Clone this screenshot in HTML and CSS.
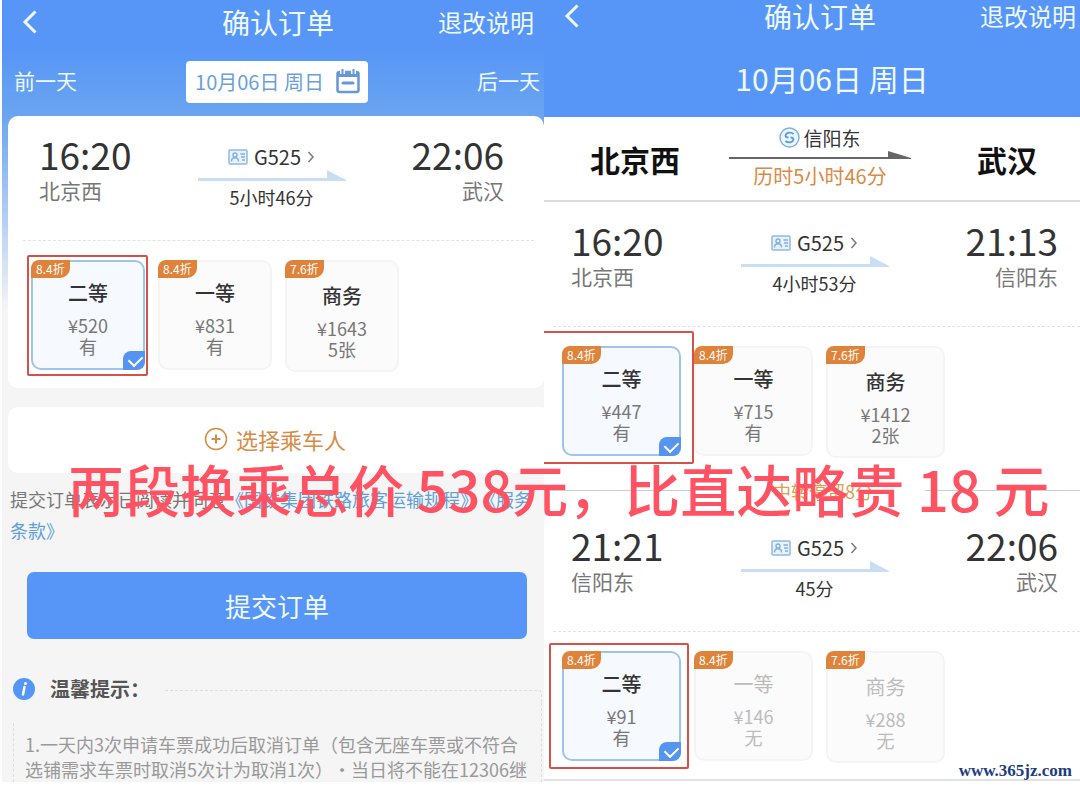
FILE: index.html
```html
<!DOCTYPE html>
<html lang="zh-CN">
<head>
    <meta charset="utf-8">
    <title>确认订单</title>
    <link rel="stylesheet" href="styles.css">
</head>
<body>
    <svg class="defs" width="0" height="0">
        <symbol id="back" viewBox="0 0 16 24">
            <path d="M13.500 1.500 3 12l10.500 10.500" fill="none" stroke="currentColor" stroke-width="3"/>
        </symbol>
        <symbol id="idcard" viewBox="0 0 20 16">
            <rect x="1" y="1" width="18" height="14" rx="1" fill="#eaf3fc" stroke="#8dbbe8" stroke-width="1.500"/>
            <circle cx="7" cy="6" r="2" fill="none" stroke="#7fb0e4" stroke-width="1.400"/>
            <path d="M3.500 12.500c0-5 7-5 7 0M12.500 5H17M13 8h4M14 11h3" fill="none" stroke="#7fb0e4" stroke-width="1.400"/>
        </symbol>
        <symbol id="more" viewBox="0 0 8 12">
            <path d="M1.500 1 6 6l-4.500 5" fill="none" stroke="#777" stroke-width="1.500"/>
        </symbol>
        <symbol id="arrow" viewBox="0 0 148 12">
            <path d="M0 8h129V0l19 10v1H0z" fill="#c9def5"/>
        </symbol>
    </svg>

    <div class="compare">
        <!-- direct train -->
        <section class="phone phone-direct">
            <header class="bar">
                <button class="back" aria-label="返回"><svg width="16" height="24"><use href="#back"/></svg></button>
                <h1>确认订单</h1>
                <a class="rules" href="#">退改说明</a>
            </header>
            <nav class="days">
                <button class="day">前一天</button>
                <button class="date">10月06日 周日
                    <svg width="24" height="26" viewBox="0 0 24 26">
                        <rect x="1.500" y="4" width="21" height="20" rx="2" fill="none" stroke="#6598d6" stroke-width="2.500"/>
                        <path d="M1 4h22v5H1z" fill="#6598d6"/>
                        <path d="M6.500 0v6M17.500 0v6" stroke="#fff" stroke-width="5"/>
                        <path d="M6.500 1v5M17.500 1v5" stroke="#6598d6" stroke-width="2"/>
                        <path d="M7 15h10" stroke="#6598d6" stroke-width="3" stroke-linecap="round"/>
                    </svg>
                </button>
                <button class="day">后一天</button>
            </nav>

            <div class="card">
                <div class="trip">
                    <div class="stop"><b>16:20</b><span>北京西</span></div>
                    <div class="train">
                        <a href="#"><svg width="20" height="16"><use href="#idcard"/></svg>G525<svg width="8" height="12"><use href="#more"/></svg></a>
                        <svg class="arrow" width="148" height="12"><use href="#arrow"/></svg>
                        <span>5小时46分</span>
                    </div>
                    <div class="stop stop-end"><b>22:06</b><span>武汉</span></div>
                </div>
                <div class="seats">
                    <label class="seat marked">
                        <input type="radio" name="direct" checked>
                        <i>8.4折</i><b>二等</b><span>¥520</span><span>有</span>
                    </label>
                    <label class="seat">
                        <input type="radio" name="direct">
                        <i>8.4折</i><b>一等</b><span>¥831</span><span>有</span>
                    </label>
                    <label class="seat business">
                        <input type="radio" name="direct">
                        <i>7.6折</i><b>商务</b><span>¥1643</span><span>5张</span>
                    </label>
                </div>
            </div>

            <button class="card passenger">
                <svg width="24" height="24" viewBox="0 0 24 24" fill="none" stroke="#d68c45">
                    <circle cx="12" cy="12" r="10.500" stroke-width="1.500"/>
                    <path d="M12 7.500v9M7.500 12h9" stroke-width="2"/>
                </svg>
                选择乘车人
            </button>

            <p class="terms">提交订单表示已阅读并同意<a href="#">《国铁集团铁路旅客运输规程》《服务条款》</a></p>
            <button class="submit">提交订单</button>

            <div class="tips">
                <h2>
                    <svg width="22" height="22" viewBox="0 0 22 22">
                        <circle cx="11" cy="11" r="11" fill="#5595f3"/>
                        <path d="M11.500 9 10 16.500" stroke="#fff" stroke-width="2.500" stroke-linecap="round"/>
                        <circle cx="12.500" cy="5.500" r="1.500" fill="#fff"/>
                    </svg>
                    温馨提示：
                </h2>
                <div class="tips-body">
                    <p>1.一天内3次申请车票成功后取消订单（包含无座车票或不符合选铺需求车票时取消5次计为取消1次）・当日将不能在12306继</p>
                </div>
            </div>
        </section>

        <!-- same train, split in two legs -->
        <section class="phone phone-split">
            <header class="bar">
                <button class="back" aria-label="返回"><svg width="16" height="24"><use href="#back"/></svg></button>
                <h1>确认订单</h1>
                <a class="rules" href="#">退改说明</a>
            </header>
            <div class="big-date">10月06日 周日</div>

            <div class="route">
                <strong>北京西</strong>
                <div class="via">
                    <div class="via-stop">
                        <svg width="21" height="21" viewBox="0 0 21 21" fill="none" stroke="#7fb3df">
                            <circle cx="10.500" cy="10.500" r="9.500" fill="#eef6fd" stroke-width="1.500"/>
                            <path d="M14.500 7c-2-2-7-2-8 1.500 0 1.500 1.500 2 3 2M6.500 14c2 2 7 2 8-1.500 0-1.500-1.500-2-3-2" stroke="#5f9fd8" stroke-width="1.800"/>
                        </svg>
                        信阳东
                    </div>
                    <svg class="arrow" width="182" height="8" viewBox="0 0 182 8"><path d="M0 6h159V0l23 7v1H0z" fill="#666"/></svg>
                    <span class="total">历时5小时46分</span>
                </div>
                <strong>武汉</strong>
            </div>

            <div class="trip">
                <div class="stop"><b>16:20</b><span>北京西</span></div>
                <div class="train">
                    <a href="#"><svg width="20" height="16"><use href="#idcard"/></svg>G525<svg width="8" height="12"><use href="#more"/></svg></a>
                    <svg class="arrow" width="148" height="12"><use href="#arrow"/></svg>
                    <span>4小时53分</span>
                </div>
                <div class="stop stop-end"><b>21:13</b><span>信阳东</span></div>
            </div>
            <div class="seats">
                <label class="seat marked marked-wide">
                    <input type="radio" name="leg1" checked>
                    <i>8.4折</i><b>二等</b><span>¥447</span><span>有</span>
                </label>
                <label class="seat">
                    <input type="radio" name="leg1">
                    <i>8.4折</i><b>一等</b><span>¥715</span><span>有</span>
                </label>
                <label class="seat business">
                    <input type="radio" name="leg1">
                    <i>7.6折</i><b>商务</b><span>¥1412</span><span>2张</span>
                </label>
            </div>

            <div class="transfer">中转停留8分</div>

            <div class="trip">
                <div class="stop"><b>21:21</b><span>信阳东</span></div>
                <div class="train">
                    <a href="#"><svg width="20" height="16"><use href="#idcard"/></svg>G525<svg width="8" height="12"><use href="#more"/></svg></a>
                    <svg class="arrow" width="148" height="12"><use href="#arrow"/></svg>
                    <span>45分</span>
                </div>
                <div class="stop stop-end"><b>22:06</b><span>武汉</span></div>
            </div>
            <div class="seats">
                <label class="seat marked marked-mid">
                    <input type="radio" name="leg2" checked>
                    <i>8.4折</i><b>二等</b><span>¥91</span><span>有</span>
                </label>
                <label class="seat sold-out">
                    <input type="radio" name="leg2" disabled>
                    <i>8.4折</i><b>一等</b><span>¥146</span><span>无</span>
                </label>
                <label class="seat sold-out business">
                    <input type="radio" name="leg2" disabled>
                    <i>7.6折</i><b>商务</b><span>¥288</span><span>无</span>
                </label>
            </div>
        </section>

        <p class="caption">两段换乘总价 538元，比直达略贵 18 元</p>
        <div class="watermark">www.365jz.com</div>
    </div>
</body>
</html>
```

FILE: styles.css
```css
* {
    box-sizing: border-box;
}

body {
    margin: 0;
    background: #fff;
    color: #333;
    font-family: "Noto Sans CJK SC", sans-serif;
    font-size: 18px;
    text-spacing-trim: space-all;
}

h1, h2, p {
    margin: 0;
    font-weight: 400;
}

a {
    color: inherit;
    text-decoration: none;
}

button {
    border: 0;
    padding: 0;
    background: none;
    color: inherit;
    font: inherit;
    cursor: pointer;
}

svg {
    display: block;
    flex: none;
}

.defs {
    position: absolute;
}

.compare {
    position: relative;
    display: grid;
    grid-template-columns: 542fr 536fr;
    align-items: start;
    padding-left: 2px;
}

.phone {
    overflow: hidden;
    min-width: 0;
}

.phone-direct {
    background: #f5f5f5 linear-gradient(#5796f6 50px, #6ba5f0 116px, #f5f5f5 310px);
}

.phone-split {
    border-bottom: 2px solid #e2e2e2;
    background: #fff;
}

/* header */

.bar {
    display: grid;
    grid-template-columns: 1fr auto 1fr;
    align-items: center;
    height: 44px;
    padding: 0 10px 0 20px;
    color: #eefaff;
}

.bar h1 {
    font-size: 28px;
    line-height: 32px;
}

.back {
    justify-self: start;
}

.rules {
    justify-self: end;
    font-size: 24px;
    line-height: 32px;
}

.days {
    display: flex;
    justify-content: space-between;
    align-items: center;
    padding: 17px 4px 13px 12px;
    color: #eefaff;
}

.day {
    padding-bottom: 4px;
    font-size: 21px;
    line-height: 36px;
}

.date {
    display: flex;
    align-items: center;
    gap: 12px;
    height: 42px;
    padding: 0 8px 2px 9px;
    border-radius: 4px;
    background: #fff;
    color: #6b9fd8;
    font-size: 20px;
}

.phone-split .bar {
    height: 34px;
    padding: 0 4px 2px 20px;
    background: #5796f6;
}

.big-date {
    height: 83px;
    padding-left: 40px;
    background: #5796f6;
    color: #eefaff;
    font-size: 30px;
    line-height: 88px;
    text-align: center;
}

.card {
    display: block;
    margin-left: 6px;
    border-radius: 10px;
    background: #fff;
}

/* departure, train, arrival */

.trip {
    display: grid;
    grid-template-columns: 1fr auto 1fr;
    margin-left: 9px;
    padding: 16px 22px 30px 18px;
    border-bottom: 1px dashed #e2e2e2;
}

.card .trip {
    margin: 0 10px 0 15px;
    padding-left: 16px;
    padding-right: 30px;
}

.stop {
    display: flex;
    flex-direction: column;
}

.stop b {
    font-size: 37px;
    font-weight: 400;
    line-height: 44px;
}

.stop span {
    color: #777;
    font-size: 21px;
    line-height: 28px;
}

.stop-end {
    align-items: flex-end;
}

.train {
    display: flex;
    flex-direction: column;
    align-items: center;
    padding-top: 12px;
    line-height: 26px;
}

.train a {
    display: flex;
    align-items: center;
    gap: 6px;
    font-size: 20px;
}

.train span {
    margin-top: 2px;
}

/* seat classes */

.seats {
    display: grid;
    grid-template-columns: repeat(3, 119px);
    gap: 13px;
    align-items: start;
    padding: 19px 18px 16px;
}

.card .seats {
    grid-template-columns: repeat(3, 114px);
    padding-left: 23px;
}

.seat {
    position: relative;
    display: flex;
    flex-direction: column;
    align-items: center;
    height: 110px;
    padding-top: 18px;
    border: 2px solid #f4f4f4;
    border-radius: 10px;
    background: #fbfbfb;
    color: #777;
    line-height: 21px;
}

.seat b {
    margin-bottom: 9px;
    color: #333;
    font-size: 20px;
    font-weight: 500;
    line-height: 26px;
}

.seat i {
    position: absolute;
    top: -2px;
    left: -2px;
    height: 18px;
    padding: 0 5px;
    border-radius: 8px 0 10px 0;
    background: #e0833a;
    color: #fff;
    font-size: 12px;
    font-style: normal;
    line-height: 17px;
}

.seat input {
    position: absolute;
    right: -2px;
    bottom: -2px;
    width: 22px;
    height: 19px;
    margin: 0;
    appearance: none;
}

.seat input:checked {
    border-radius: 8px 0 8px 0;
    background: #5595f0;
}

.seat input:checked::after {
    content: "";
    position: absolute;
    top: 4px;
    left: 6px;
    width: 11px;
    height: 7px;
    border: solid #fff;
    border-width: 0 0 2px 2px;
    transform: rotate(-45deg);
}

.business {
    height: 112px;
    padding-top: 21px;
}

.seat:has(input:checked) {
    border: 2px solid #9fc4ea;
    background: #f6faff;
}

.sold-out,
.sold-out b {
    color: #bbb;
    font-weight: 400;
}

/* red marker box round the chosen seat */

.marked::after {
    content: "";
    position: absolute;
    inset: -7px -5px -8px -6px;
    border: 2px solid #d4524a;
    border-radius: 2px;
}

.marked-wide::after {
    inset: -17px -15px -10px -24px;
}

.marked-mid::after {
    inset: -10px -10px -10px -15px;
}

/* passenger, terms, submit */

.passenger {
    display: flex;
    justify-content: center;
    align-items: center;
    gap: 8px;
    width: 100%;
    height: 66px;
    margin-top: 19px;
    padding: 0 8px 3px 0;
    color: #d68c45;
    font-size: 22px;
}

.terms {
    padding: 11px 0 0 8px;
    color: #777;
    line-height: 31px;
}

.terms a {
    color: #5f9fd8;
}

.submit {
    display: block;
    width: calc(100% - 42px);
    height: 67px;
    margin: 26px 0 0 25px;
    border-radius: 7px;
    background: #5796f6;
    color: #eefaff;
    font-size: 26px;
}

.tips {
    padding: 36px 2px 0 11px;
}

.tips h2 {
    display: flex;
    align-items: center;
    gap: 15px;
    color: #555;
    font-size: 20px;
    font-weight: 700;
    line-height: 28px;
}

.tips h2::after {
    content: "";
    flex: 1;
    align-self: flex-end;
    height: 12px;
    border: dashed #ddd;
    border-width: 1px 1px 0 0;
    border-radius: 0 4px 0 0;
}

.tips-body {
    padding-top: 20px;
    border-right: 1px dashed #ddd;
}

.tips-body p {
    padding: 9px 8px 0 11px;
    border-left: 1px dashed #ddd;
    color: #999;
    line-height: 25px;
}

/* split ticket summary */

.route {
    display: flex;
    align-items: center;
    height: 85px;
    padding: 0 43px 0 46px;
    border-bottom: 2px solid #ddd;
}

.route strong {
    color: #111;
    font-size: 30px;
    font-weight: 700;
}

.route strong:last-child {
    margin-left: auto;
}

.via {
    display: flex;
    flex-direction: column;
    align-items: center;
    margin-left: 49px;
}

.via-stop {
    display: flex;
    align-items: center;
    gap: 3px;
    font-size: 19px;
    line-height: 26px;
}

.total {
    color: #d98a45;
    font-size: 20px;
    line-height: 34px;
}

.transfer {
    display: flex;
    align-items: center;
    gap: 52px;
    height: 33px;
    color: #d9a050;
}

.transfer::before,
.transfer::after {
    content: "";
    flex: 8;
    height: 1px;
    background: #ccc;
}

.transfer::after {
    flex: 7;
}

/* over both screens */

.caption {
    position: absolute;
    top: 460px;
    left: 68px;
    color: #ff5263;
    font-size: 56px;
    font-weight: 500;
    line-height: 56px;
    white-space: nowrap;
}

.watermark {
    position: absolute;
    right: 8px;
    bottom: 0;
    color: #1d3d80;
    font-family: "Liberation Serif", serif;
    font-size: 17px;
    font-weight: 700;
    line-height: 22px;
}
```
